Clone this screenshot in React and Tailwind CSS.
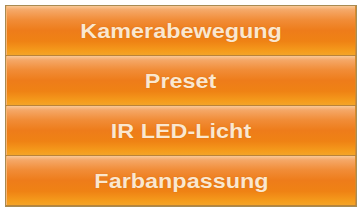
const items = ['Kamerabewegung', 'Preset', 'IR LED-Licht', 'Farbanpassung'];

export default function App() {
  return (
    <div className="w-[362px] h-[209px] bg-white pt-[5px] pl-[5px]">
      <div className="w-[352px] border border-[#a88b52] bg-[#c98a36] flex flex-col">
        {items.map((label, i) => (
          <div
            key={label}
            className={
              'h-[50px] flex items-center justify-center border-b border-[#b9843a] ' +
              'bg-[linear-gradient(to_bottom,#f9c896_0%,#f5a868_8%,#f18d38_28%,#ee7c1a_50%,#ef8214_72%,#f59c1c_92%,#f3a428_100%)] ' +
              'shadow-[inset_1px_0_0_#f6b575,inset_-1px_0_0_#d98a2c]'
            }
          >
            <span
              className="font-['Liberation_Sans',Arial,sans-serif] font-bold text-[20px] leading-none text-[#fbe7cf] scale-x-[1.17] [text-shadow:0_0_1px_rgba(150,70,0,0.4)]"
            >
              {label}
            </span>
          </div>
        ))}
      </div>
    </div>
  );
}
